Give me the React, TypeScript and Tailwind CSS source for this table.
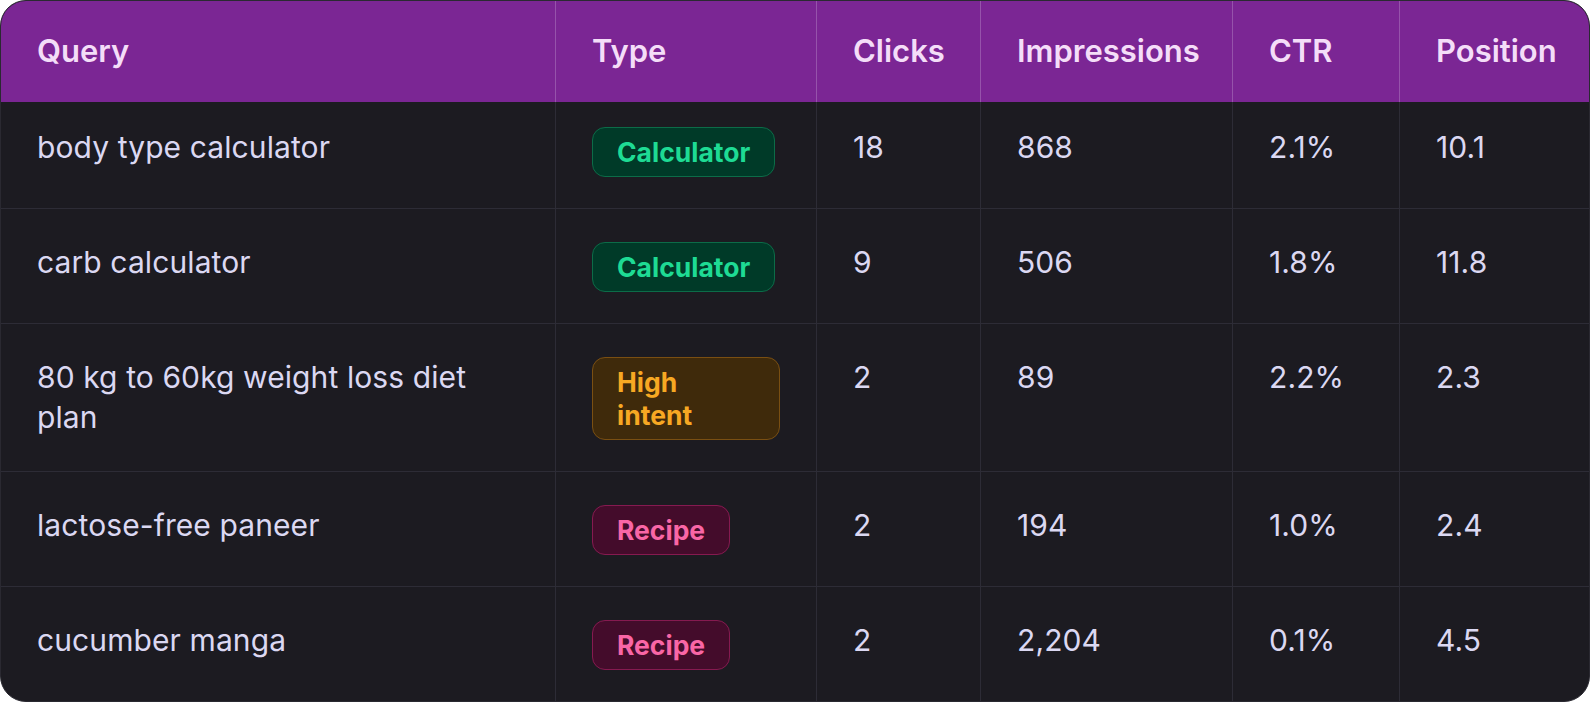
import React from "react";

type Kind = "calc" | "intent" | "recipe";

const rows: { q: string; type: string; kind: Kind; clicks: string; imp: string; ctr: string; pos: string }[] = [
  { q: "body type calculator", type: "Calculator", kind: "calc", clicks: "18", imp: "868", ctr: "2.1%", pos: "10.1" },
  { q: "carb calculator", type: "Calculator", kind: "calc", clicks: "9", imp: "506", ctr: "1.8%", pos: "11.8" },
  { q: "80 kg to 60kg weight loss diet plan", type: "High intent", kind: "intent", clicks: "2", imp: "89", ctr: "2.2%", pos: "2.3" },
  { q: "lactose-free paneer", type: "Recipe", kind: "recipe", clicks: "2", imp: "194", ctr: "1.0%", pos: "2.4" },
  { q: "cucumber manga", type: "Recipe", kind: "recipe", clicks: "2", imp: "2,204", ctr: "0.1%", pos: "4.5" },
];

const badgeClass: Record<Kind, string> = {
  calc: "bg-[#003a28] border-[#0c6c48] text-[#1edb94]",
  intent: "bg-[#3f2a0b] border-[#7a4f12] text-[#f7a823]",
  recipe: "bg-[#440c2b] border-[#861a50] text-[#f966a6]",
};

const headers = ["Query", "Type", "Clicks", "Impressions", "CTR", "Position"];

export default function App() {
  return (
    <div className="w-[1590px] bg-white" style={{ fontFamily: "Inter, 'Noto Sans', sans-serif" }}>
      <div className="rounded-[26px] overflow-hidden border border-[#2a2931] bg-[#1c1b21]">
        <div className="grid grid-cols-[554px_261px_164px_252px_167px_1fr]">
          {headers.map((h, i) => (
            <div
              key={h}
              className={`h-[101px] flex items-center bg-[#7b2694] pl-[36px] pr-[36px] text-[31px] font-semibold text-[#f4ddf8] ${
                i > 0 ? "border-l border-[#9653ab]" : ""
              }`}
            >
              {h}
            </div>
          ))}
          {rows.map((r, ri) => {
            const pad = ri === 0 ? "pt-[25px] pb-[31px]" : "pt-[33px] pb-[31px] border-t border-[#2d2c36]";
            const cell = `${pad} pl-[36px] pr-[36px] text-[30px] tracking-[0.1px] leading-[40px] text-[#dbd8f2]`;
            const vcell = `${cell} border-l border-[#2d2c36]`;
            return (
              <React.Fragment key={ri}>
                <div className={cell}>{r.q}</div>
                <div className={vcell}>
                  <span
                    className={`inline-block rounded-[13px] border px-[24px] py-[7.5px] text-[26.5px] tracking-normal font-bold leading-[33px] ${badgeClass[r.kind]}`}
                  >
                    {r.type}
                  </span>
                </div>
                <div className={vcell}>{r.clicks}</div>
                <div className={vcell}>{r.imp}</div>
                <div className={vcell}>{r.ctr}</div>
                <div className={vcell}>{r.pos}</div>
              </React.Fragment>
            );
          })}
        </div>
      </div>
    </div>
  );
}
